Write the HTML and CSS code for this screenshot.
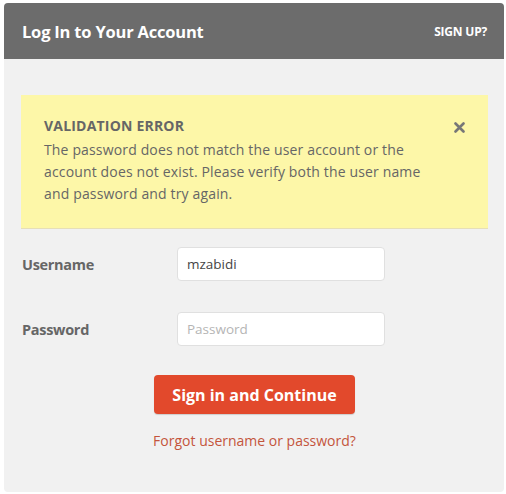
FILE: index.html
```html
<!DOCTYPE html>
<html>
<head>
<meta charset="utf-8">
<link rel="stylesheet" href="styles.css">
</head>
<body>
<div class="card">
  <div class="header">
    <h1 class="title">Log In to Your Account</h1>
    <a class="signup">SIGN UP?</a>
  </div>
  <div class="content">
    <div class="alert">
      <div class="alert-text">
        <div class="alert-title">VALIDATION ERROR</div>
        <p class="alert-msg">The password does not match the user account or the account does not exist. Please verify both the user name and password and try again.</p>
      </div>
      <svg class="close" width="11" height="11" viewBox="0 0 11 11"><path d="M1.5 1.5 L9.5 9.5 M9.5 1.5 L1.5 9.5" stroke="#777" stroke-width="2.6" stroke-linecap="round"/></svg>
    </div>
    <form class="form">
      <div class="row">
        <label class="label">Username</label>
        <div class="input">mzabidi</div>
      </div>
      <div class="row">
        <label class="label">Password</label>
        <div class="input placeholder">Password</div>
      </div>
      <div class="actions">
        <button type="button" class="btn">Sign in and Continue</button>
        <a class="forgot">Forgot username or password?</a>
      </div>
    </form>
  </div>
</div>
</body>
</html>
```
FILE: styles.css
```css
* { box-sizing: border-box; }
html, body { margin: 0; background: #fff; }
body {
  padding: 3px 2px 0 4px;
  font-family: "Open Sans", "Lato", sans-serif;
  color: #666;
}
.card {
  width: 500px;
  border-radius: 4px;
  overflow: hidden;
  background: #f1f1f1;
}
.header {
  height: 56px;
  background: #6c6c6c;
  display: flex;
  align-items: center;
  justify-content: space-between;
  padding: 0 17px 0 18px;
}
.title {
  margin: 0;
  font-size: 16.5px;
  font-weight: 700;
  color: #fff;
  letter-spacing: -0.2px;
}
.signup {
  font-size: 12px;
  font-weight: 700;
  color: #fff;
  letter-spacing: -0.2px;
}
.content {
  padding: 36px 16px 42px 17px;
}
.alert {
  background: #fdf7a8;
  border-bottom: 1px solid #e6dfb8;
  display: flex;
  justify-content: space-between;
  align-items: flex-start;
  padding: 22px 23px 23px 23px;
}
.alert-title {
  font-size: 14px;
  font-weight: 700;
  color: #666;
  line-height: 18px;
  letter-spacing: 0.2px;
}
.alert-msg {
  margin: 4px 0 0;
  font-size: 14px;
  line-height: 22px;
  color: #666;
  width: 384px;
  letter-spacing: 0.15px;
}
.close {
  margin-top: 5px;
  display: block;
}
.form {
  padding-top: 18px;
}
.row {
  display: flex;
  align-items: center;
  margin-bottom: 31px;
  height: 34px;
}
.label {
  width: 156px;
  padding-left: 1px;
  font-size: 14.5px;
  font-weight: 700;
  color: #666;
  letter-spacing: -0.3px;
}
.input {
  width: 208px;
  height: 34px;
  background: #fff;
  border: 1px solid #e0e0e0;
  border-radius: 4px;
  padding: 0 9px;
  display: flex;
  align-items: center;
  font-size: 13.5px;
  color: #444;
}
.input.placeholder { color: #b5b5b5; }
.actions {
  display: flex;
  flex-direction: column;
  align-items: center;
  margin-top: -2px;
}
.btn {
  width: 201px;
  height: 39px;
  background: #e2492c;
  border: none;
  border-radius: 4px;
  color: #fff;
  font-family: inherit;
  font-size: 16px;
  font-weight: 700;
  letter-spacing: 0;
  box-shadow: 0 1px 1px rgba(0,0,0,0.15);
}
.forgot {
  margin-top: 17px;
  font-size: 14px;
  color: #c4553c;
}
```
